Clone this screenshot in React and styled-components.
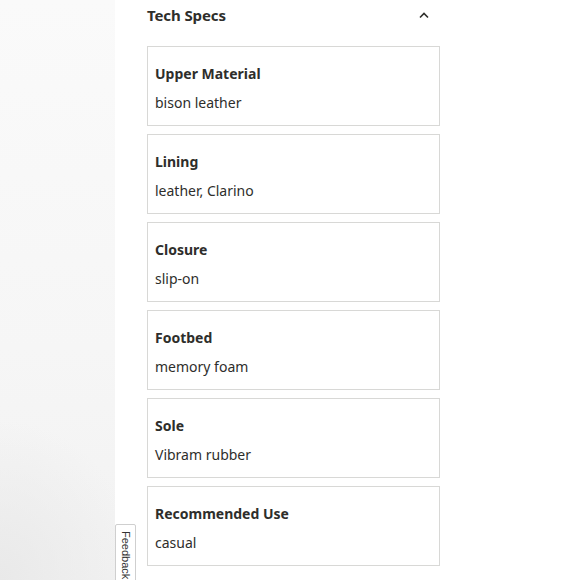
import React from "react";
import styled, { createGlobalStyle } from "styled-components";

const GlobalStyle = createGlobalStyle`
  html, body {
    margin: 0;
    padding: 0;
    background: #fff;
  }
  body {
    font-family: "Noto Sans", "Open Sans", sans-serif;
    color: #2e2e2b;
  }
`;

const Page = styled.div`
  display: flex;
  width: 580px;
  height: 580px;
  overflow: hidden;
  position: relative;
`;

const Backdrop = styled.div`
  width: 115px;
  flex-shrink: 0;
  background:
    radial-gradient(ellipse 140px 160px at 0% 100%, #e9e9e9 0%, rgba(240, 240, 240, 0) 100%),
    linear-gradient(180deg, #fafafa 0%, #f6f6f6 60%, #f2f2f2 100%);
`;

const Main = styled.div`
  padding-left: 32px;
  width: 293px;
`;

const Header = styled.div`
  display: flex;
  align-items: center;
  justify-content: space-between;
  height: 30px;
  margin-bottom: 16px;
`;

const Title = styled.h2`
  margin: 0;
  font-size: 15px;
  font-weight: 700;
  letter-spacing: -0.1px;
`;

const Toggle = styled.button`
  border: none;
  background: none;
  padding: 0;
  margin-right: 10px;
  width: 12px;
  height: 12px;
  display: flex;
  align-items: center;
  justify-content: center;
  color: #2e2e2b;
  cursor: pointer;
`;

const List = styled.div`
  display: flex;
  flex-direction: column;
  gap: 8px;
`;

const Card = styled.div`
  box-sizing: border-box;
  height: 80px;
  padding: 16px 7px 0;
  border: 1px solid #d8d8d6;
`;

const Label = styled.div`
  font-size: 14px;
  font-weight: 700;
  line-height: 22px;
  margin-bottom: 7px;
`;

const Value = styled.div`
  font-size: 14px;
  font-weight: 400;
  line-height: 22px;
`;

const FeedbackTab = styled.button`
  position: absolute;
  left: 115px;
  top: 524px;
  width: 21px;
  height: 70px;
  padding: 6px 0 0;
  background: #fff;
  border: 1px solid #cfcfcf;
  border-radius: 2px 2px 0 0;
  writing-mode: vertical-rl;
  font-family: "Liberation Sans", Arial, sans-serif;
  font-size: 11px;
  color: #333;
  display: flex;
  align-items: center;
  cursor: pointer;
`;

const specs = [
  { label: "Upper Material", value: "bison leather" },
  { label: "Lining", value: "leather, Clarino" },
  { label: "Closure", value: "slip-on" },
  { label: "Footbed", value: "memory foam" },
  { label: "Sole", value: "Vibram rubber" },
  { label: "Recommended Use", value: "casual" },
];

const ChevronUp = () => (
  <svg width="10" height="7" viewBox="0 0 10 7" fill="none">
    <path d="M1 5.5 L5 1.5 L9 5.5" stroke="currentColor" strokeWidth="1.6" />
  </svg>
);

const App = () => {
  return (
    <Page>
      <GlobalStyle />
      <Backdrop />
      <Main>
        <Header>
          <Title>Tech Specs</Title>
          <Toggle aria-label="Collapse">
            <ChevronUp />
          </Toggle>
        </Header>
        <List>
          {specs.map((s) => (
            <Card key={s.label}>
              <Label>{s.label}</Label>
              <Value>{s.value}</Value>
            </Card>
          ))}
        </List>
      </Main>
      <FeedbackTab>Feedback</FeedbackTab>
    </Page>
  );
};

export default App;
